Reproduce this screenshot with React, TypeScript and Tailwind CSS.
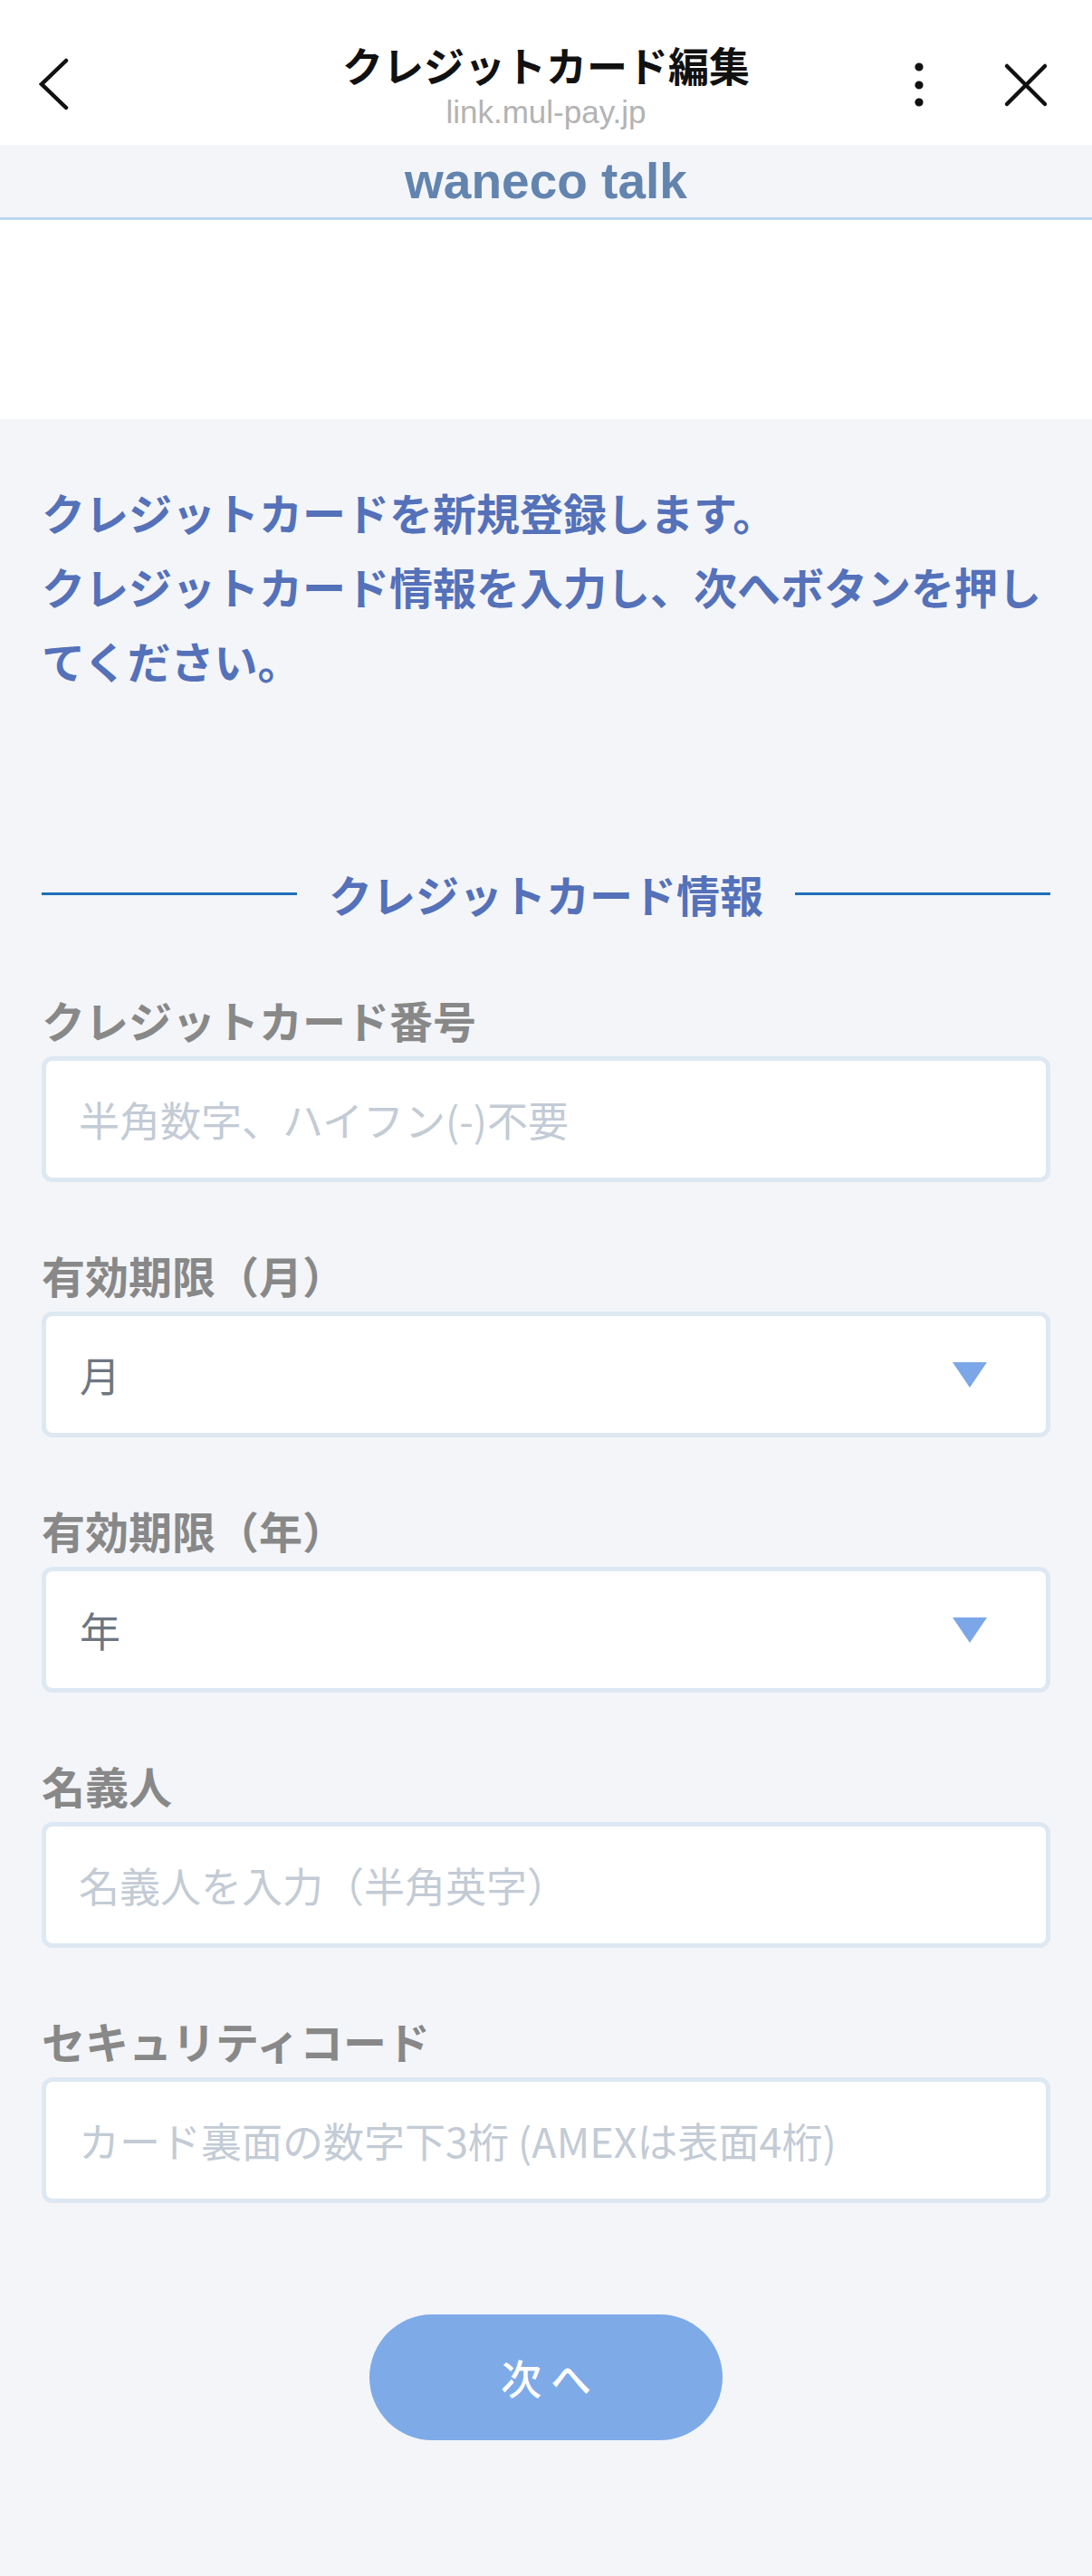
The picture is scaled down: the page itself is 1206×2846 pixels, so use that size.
import React from "react";

const cjk = "font-['Noto_Sans_CJK_JP',sans-serif]";

function Chevron() {
  return (
    <svg width="34" height="58" viewBox="0 0 34 58" className="mt-[64px] ml-[42px]">
      <path d="M31 3 L4 29 L31 55" fill="none" stroke="#111" strokeWidth="4.5" strokeLinecap="round" strokeLinejoin="miter" />
    </svg>
  );
}

function Dots() {
  return (
    <svg width="14" height="54" viewBox="0 0 14 54" className="mt-[67px]">
      <circle cx="7" cy="7" r="4.6" fill="#111" />
      <circle cx="7" cy="27" r="4.6" fill="#111" />
      <circle cx="7" cy="46" r="4.6" fill="#111" />
    </svg>
  );
}

function Close() {
  return (
    <svg width="50" height="50" viewBox="0 0 50 50" className="mt-[69px] ml-[86px]">
      <path d="M4 4 L46 46 M46 4 L4 46" fill="none" stroke="#111" strokeWidth="4.5" strokeLinecap="round" />
    </svg>
  );
}

function Triangle() {
  return (
    <svg width="40" height="30" viewBox="0 0 40 30">
      <path d="M1 1 L39 1 L20 29 Z" fill="#7ba7e8" />
    </svg>
  );
}

function Label({ children }: { children: React.ReactNode }) {
  return <div className="text-[48px] leading-[60px] font-bold text-[#888888]">{children}</div>;
}

function TextField({ placeholder }: { placeholder: string }) {
  return (
    <input
      type="text"
      placeholder={placeholder}
      className={`mt-[11px] block w-full h-[139px] rounded-[12px] border-[5px] border-[#dde8f2] bg-white pl-[36px] pr-[30px] text-[45px] text-[#555] placeholder:text-[#c3cbd5] outline-none ${cjk}`}
    />
  );
}

function SelectField({ value }: { value: string }) {
  return (
    <div className="mt-[11px] flex items-center justify-between w-full h-[139px] rounded-[12px] border-[5px] border-[#dde8f2] bg-white pl-[37px] pr-[64px]">
      <span className="text-[45px] text-[#6e7682]">{value}</span>
      <Triangle />
    </div>
  );
}

export default function App() {
  return (
    <div className={`w-[1206px] min-h-[2846px] bg-[#f3f5f9] ${cjk}`}>
      {/* Browser header */}
      <div className="grid grid-cols-[200px_1fr_200px] h-[160px] bg-white">
        <div className="flex items-start">
          <Chevron />
        </div>
        <div className="flex flex-col items-center pt-[46px]">
          <div className="text-[45px] leading-[52px] font-bold text-[#111]">クレジットカード編集</div>
          <div className="mt-[6px] text-[35px] leading-[40px] text-[#b3b3b3] font-['Liberation_Sans',sans-serif]">link.mul-pay.jp</div>
        </div>
        <div className="flex items-start pl-[2px]">
          <Dots />
          <Close />
        </div>
      </div>

      {/* Site band */}
      <div className="h-[83px] bg-[#f3f5f9] border-b-[3px] border-[#bfd5f1] flex items-center justify-center">
        <span className="text-[55px] leading-[60px] font-bold text-[#6284af] font-['Liberation_Sans',sans-serif]">waneco talk</span>
      </div>

      {/* White area */}
      <div className="h-[220px] bg-white" />

      {/* Main */}
      <div className="px-[46px] pt-[61px] pb-[148px]">
        <p className="text-[48px] leading-[82px] font-bold text-[#5471b9]">
          クレジットカードを新規登録します。
          <br />
          クレジットカード情報を入力し、次へボタンを押してください。
        </p>

        <div className="mt-[187px] flex items-center">
          <div className="flex-1 h-[3px] bg-[#1f6fb7]" />
          <div className="mx-[35px] text-[48px] leading-[60px] font-bold text-[#5471b9]">クレジットカード情報</div>
          <div className="flex-1 h-[3px] bg-[#1f6fb7]" />
        </div>

        <div className="mt-[79px] flex flex-col gap-[72px]">
          <div>
            <Label>クレジットカード番号</Label>
            <TextField placeholder="半角数字、ハイフン(-)不要" />
          </div>
          <div>
            <Label>有効期限（月）</Label>
            <SelectField value="月" />
          </div>
          <div>
            <Label>有効期限（年）</Label>
            <SelectField value="年" />
          </div>
          <div>
            <Label>名義人</Label>
            <TextField placeholder="名義人を入力（半角英字）" />
          </div>
          <div>
            <Label>セキュリティコード</Label>
            <TextField placeholder="カード裏面の数字下3桁 (AMEXは表面4桁)" />
          </div>
        </div>

        <div className="mt-[123px] flex justify-center">
          <button className="w-[390px] h-[139px] rounded-full bg-[#7eaae8] text-white text-[45px] font-medium tracking-[10px] pl-[10px]">
            次へ
          </button>
        </div>
      </div>
    </div>
  );
}
